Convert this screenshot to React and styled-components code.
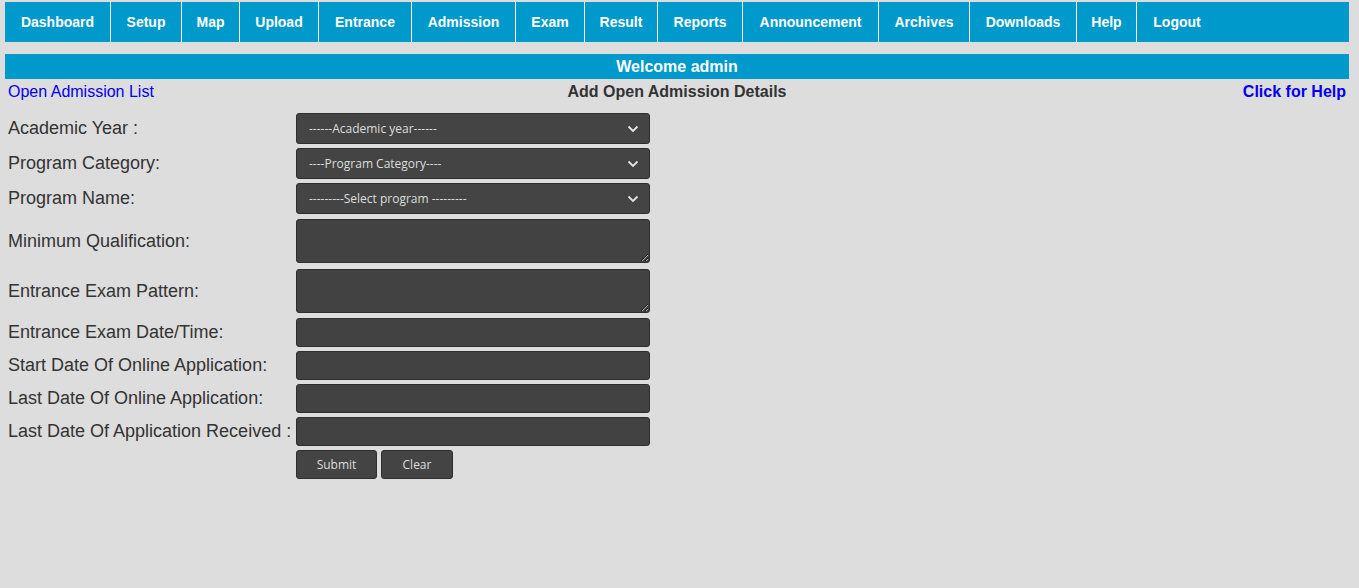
import React from "react";
import styled, { createGlobalStyle } from "styled-components";

const GlobalStyle = createGlobalStyle`
  html, body {
    margin: 0;
    padding: 0;
    background: #dddddd;
    font-family: "Liberation Sans", Arial, sans-serif;
  }
`;

const Page = styled.div`
  padding: 2px 10px 0 5px;
  box-sizing: border-box;
  width: 1359px;
  height: 588px;
`;

const NavBar = styled.ul`
  display: flex;
  margin: 0;
  padding: 0;
  list-style: none;
  height: 40px;
  background: #0099cc;
`;

const NavItem = styled.li`
  display: flex;
  align-items: center;
  justify-content: center;
  box-sizing: border-box;
  width: ${(p) => p.$w}px;
  color: #ffffff;
  font-weight: bold;
  font-size: 14px;
  border-right: ${(p) => (p.$last ? "none" : "1px solid #ffffff")};
  cursor: pointer;
`;

const WelcomeBar = styled.div`
  margin-top: 12px;
  height: 25px;
  line-height: 25px;
  background: #0099cc;
  color: #ffffff;
  font-weight: bold;
  font-size: 16px;
  text-align: center;
`;

const TitleRow = styled.div`
  display: grid;
  grid-template-columns: 1fr auto 1fr;
  align-items: center;
  height: 26px;
  padding: 0 3px;
  font-size: 16px;
`;

const LinkText = styled.a`
  color: #0000ee;
  text-decoration: none;
  font-weight: ${(p) => (p.$bold ? "bold" : "normal")};
  justify-self: ${(p) => (p.$right ? "end" : "start")};
`;

const Heading = styled.div`
  font-weight: bold;
  color: #333333;
`;

const Form = styled.form`
  display: grid;
  grid-template-columns: 291px 354px;
  row-gap: 4px;
  align-items: center;
  margin-top: 8px;
`;

const Label = styled.label`
  padding-left: 3px;
  font-size: 18px;
  color: #333333;
  white-space: nowrap;
`;

const fieldBase = `
  box-sizing: border-box;
  width: 354px;
  background-color: #424242;
  border: 1px solid #2e2e2e;
  border-radius: 3px;
  color: #dddddd;
  font-family: "Open Sans", "Noto Sans", sans-serif;
  font-size: 12px;
  outline: none;
  margin: 0;
`;

const Select = styled.select`
  ${fieldBase}
  height: 31px;
  padding: 0 30px 0 12px;
  background-color: #444444;
  appearance: none;
  -webkit-appearance: none;
  background-image: url("data:image/svg+xml;utf8,<svg xmlns='http://www.w3.org/2000/svg' width='12' height='8' viewBox='0 0 12 8'><path d='M1.5 1.5 L6 6 L10.5 1.5' fill='none' stroke='%23e6e6e6' stroke-width='1.8'/></svg>");
  background-repeat: no-repeat;
  background-position: right 10px center;
`;

const TextArea = styled.textarea`
  ${fieldBase}
  height: 44px;
  resize: vertical;
  display: block;
  margin: ${(p) => (p.$spaced ? "1px 0" : "0")};
`;

const Input = styled.input`
  ${fieldBase}
  height: 29px;
  padding: 0 8px;
`;

const ButtonRow = styled.div`
  display: flex;
  gap: 4px;
`;

const Button = styled.button`
  box-sizing: border-box;
  height: 29px;
  width: ${(p) => p.$w}px;
  background: #444444;
  border: 1px solid #2e2e2e;
  border-radius: 3px;
  color: #dddddd;
  font-family: "Open Sans", "Noto Sans", sans-serif;
  font-size: 12px;
  cursor: pointer;
`;

const menu = [
  ["Dashboard", 106],
  ["Setup", 71],
  ["Map", 58],
  ["Upload", 79],
  ["Entrance", 93],
  ["Admission", 104],
  ["Exam", 69],
  ["Result", 73],
  ["Reports", 85],
  ["Announcement", 136],
  ["Archives", 91],
  ["Downloads", 107],
  ["Help", 60],
  ["Logout", 80],
];

export default function App() {
  return (
    <Page>
      <GlobalStyle />
      <NavBar>
        {menu.map(([m, w], i) => (
          <NavItem key={m} $w={w} $last={i === menu.length - 1}>
            {m}
          </NavItem>
        ))}
      </NavBar>
      <WelcomeBar>Welcome admin</WelcomeBar>
      <TitleRow>
        <LinkText href="#">Open Admission List</LinkText>
        <Heading>Add Open Admission Details</Heading>
        <LinkText href="#" $bold $right>
          Click for Help
        </LinkText>
      </TitleRow>
      <Form onSubmit={(e) => e.preventDefault()}>
        <Label>Academic Year :</Label>
        <Select defaultValue="">
          <option value="">------Academic year------</option>
        </Select>
        <Label>Program Category:</Label>
        <Select defaultValue="">
          <option value="">----Program Category----</option>
        </Select>
        <Label>Program Name:</Label>
        <Select defaultValue="">
          <option value="">---------Select program ---------</option>
        </Select>
        <Label>Minimum Qualification:</Label>
        <TextArea $spaced />
        <Label>Entrance Exam Pattern:</Label>
        <TextArea $spaced />
        <Label>Entrance Exam Date/Time:</Label>
        <Input />
        <Label>Start Date Of Online Application:</Label>
        <Input />
        <Label>Last Date Of Online Application:</Label>
        <Input />
        <Label>Last Date Of Application Received :</Label>
        <Input />
        <span />
        <ButtonRow>
          <Button type="submit" $w={81}>
            Submit
          </Button>
          <Button type="button" $w={72}>
            Clear
          </Button>
        </ButtonRow>
      </Form>
    </Page>
  );
}
